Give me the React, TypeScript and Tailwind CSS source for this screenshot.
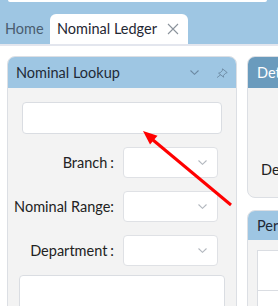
import React from 'react';

const font = { fontFamily: 'Lato, "Noto Sans", sans-serif' };

function Chevron({ className }: { className?: string }) {
  return (
    <svg width="9" height="5" viewBox="0 0 9 5" className={className} fill="none">
      <path d="M0.5 0.5 L4.5 4.3 L8.5 0.5" stroke="currentColor" strokeWidth="1.1" />
    </svg>
  );
}

function Pin() {
  return (
    <svg width="12" height="10" viewBox="0 0 12 10" fill="none" className="text-[#6d8aa3]">
      <path d="M6.5 0.8 L11.2 4.6 L9.6 5.2 L7.4 7.6 L7.6 9.2 L2.6 5.2 L4.3 4.7 L6.4 2.4 Z" stroke="currentColor" strokeWidth="0.9" strokeLinejoin="round" />
      <path d="M4.6 6.8 L1 9.6" stroke="currentColor" strokeWidth="0.9" />
    </svg>
  );
}

function SelectRow({ label, colonGap }: { label: string; colonGap: boolean }) {
  return (
    <div className="flex items-center">
      <div className="w-[106px] flex justify-end items-center text-[14.5px] text-[#222] whitespace-nowrap">
        <span>{label}</span>
        <span className={colonGap ? 'ml-[3px]' : ''}>:</span>
      </div>
      <div className="ml-[9px] w-[95px] h-[31px] bg-white border border-[#dfe1e5] rounded-[4px] flex items-center justify-end pr-[10px] text-[#b3b8bf]">
        <Chevron />
      </div>
    </div>
  );
}

export default function App() {
  return (
    <div className="relative w-[278px] h-[306px] overflow-hidden bg-white" style={font}>
      {/* tab strip */}
      <div className="relative h-[44px] bg-[#9ec6e3]">
        <div className="absolute left-[8px] top-0 w-[259px] h-[2px] bg-white rounded-b-[3px]" />
        <div className="absolute left-0 bottom-0 flex items-end whitespace-nowrap">
          <div className="h-[30px] w-[50px] pl-[5px] flex items-center text-[14.5px] text-[#4a5d70]">Home</div>
          <div className="h-[30px] w-[138px] bg-white rounded-t-[6px] flex items-center pl-[7px] text-[14.5px] text-[#1f2733]">
            <span>Nominal Ledger</span>
            <svg width="12" height="12" viewBox="0 0 12 12" className="ml-auto mr-[9px] text-[#8b939c]">
              <path d="M1 1 L11 11 M11 1 L1 11" stroke="currentColor" strokeWidth="1.1" />
            </svg>
          </div>
        </div>
      </div>
      <div className="h-[2px] bg-[#e3e6ee]" />

      {/* content */}
      <div className="flex gap-[10px] pt-[10px] pl-[7px]">
        {/* Nominal lookup panel */}
        <div className="w-[230px] h-[260px] shrink-0 border border-[#dcdfe4] rounded-t-[8px] bg-[#f3f3f3] overflow-hidden">
          <div className="h-[31px] bg-[#9ec6e3] flex items-center pl-[8px] pr-[8px] text-[14.5px] text-[#1e2a37]">
            <span className="flex-1">Nominal Lookup</span>
            <Chevron className="text-[#6d8aa3] mr-[17px]" />
            <Pin />
          </div>
          <div className="pt-[14px]">
            <div className="mx-[14px] h-[32px] bg-white border border-[#dadde2] rounded-[4px]" />
            <div className="mt-[13px] flex flex-col gap-[13px]">
              <SelectRow label="Branch" colonGap={true} />
              <SelectRow label="Nominal Range" colonGap={false} />
              <SelectRow label="Department" colonGap={true} />
            </div>
            <div className="mt-[9px] mx-[11px] h-[60px] bg-white border border-[#dadde2] rounded-[4px]" />
          </div>
        </div>

        {/* right column */}
        <div className="flex flex-col gap-[12px] shrink-0 w-[120px]">
          <div className="h-[142px] border border-[#dcdfe4] rounded-[8px] bg-[#f3f3f3] overflow-hidden">
            <div className="h-[31px] bg-[#6a9bbd] flex items-center pl-[9px] text-[14.5px] text-white whitespace-nowrap">Details</div>
            <div className="pt-[71px] pl-[13px] text-[14.5px] text-[#222] whitespace-nowrap">Department</div>
          </div>
          <div className="h-[120px] border border-[#dcdfe4] rounded-t-[8px] bg-[#f3f3f3] overflow-hidden">
            <div className="h-[29px] bg-[#9ec6e3] flex items-center pl-[9px] text-[14.5px] text-[#1e2a37] whitespace-nowrap">Periods</div>
            <div className="mt-[10px] ml-[9px] h-[80px] bg-white border border-[#dadde2]">
              <div className="h-[40px] border-b border-[#dadde2]" />
            </div>
          </div>
        </div>
      </div>

      {/* red annotation arrow */}
      <svg className="absolute left-0 top-0 pointer-events-none" width="278" height="306" viewBox="0 0 278 306">
        <line x1="231" y1="205" x2="153" y2="140" stroke="#ff0000" strokeWidth="3" />
        <polygon points="143,131 157.5,135.8 150,144.5" fill="#ff0000" />
      </svg>
    </div>
  );
}
